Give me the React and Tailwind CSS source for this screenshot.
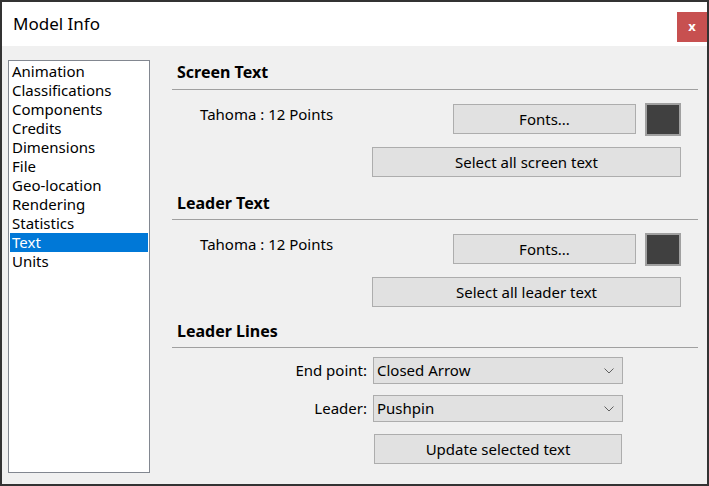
import React from 'react';

const items = [
  'Animation',
  'Classifications',
  'Components',
  'Credits',
  'Dimensions',
  'File',
  'Geo-location',
  'Rendering',
  'Statistics',
  'Text',
  'Units',
];

const font = { fontFamily: '"Noto Sans", "Open Sans", sans-serif' };

function Chevron() {
  return (
    <svg width="10" height="6" viewBox="0 0 10 6" className="shrink-0">
      <polyline points="0.5,0.5 5,5 9.5,0.5" fill="none" stroke="#606060" strokeWidth="1" />
    </svg>
  );
}

function Button({ children, className = '' }) {
  return (
    <button
      className={`h-[30px] bg-[#e1e1e1] border border-[#adadad] text-[15px] text-black flex items-center justify-center ${className}`}
    >
      {children}
    </button>
  );
}

function Select({ label, value, className = '' }) {
  return (
    <div className={`flex items-center h-[27px] ${className}`}>
      <div className="w-[195px] text-right text-[15px] text-black">{label}</div>
      <div className="ml-[6px] w-[250px] h-[27px] bg-[#e1e1e1] border border-[#adadad] flex items-center justify-between pl-[3px] pr-[8px]">
        <span className="text-[15px] text-black">{value}</span>
        <Chevron />
      </div>
    </div>
  );
}

function SectionHead({ title, className = '' }) {
  return (
    <div className={className}>
      <div className="h-[20px] pl-[5px] flex items-center text-[16px] font-bold text-black">{title}</div>
    </div>
  );
}

function FontRow({ selectLabel }) {
  return (
    <>
      <div className="mt-[13px] h-[33px] flex items-start">
        <div className="pl-[28px] h-[22px] flex items-center text-[15px] text-black">Tahoma : 12 Points</div>
        <div className="ml-auto mr-[17px] flex items-start gap-[9px]">
          <Button className="w-[183px] mt-[1px]">Fonts...</Button>
          <div className="w-[36px] h-[33px] bg-[#404040] border-2 border-[#a0a0a0]" />
        </div>
      </div>
      <div className="mt-[11px] flex justify-end pr-[17px]">
        <Button className="w-[309px]">{selectLabel}</Button>
      </div>
    </>
  );
}

export default function App() {
  return (
    <div style={font} className="w-[709px] h-[486px] border-2 border-[#333333] flex flex-col bg-[#f0f0f0]">
      {/* title bar */}
      <div className="h-[44px] bg-white flex items-start shrink-0">
        <div className="pl-[11px] h-[44px] flex items-center text-[17px] text-black">Model Info</div>
        <div className="ml-auto mt-[10px] w-[30px] h-[30px] bg-[#c75050] flex items-center justify-center text-white text-[13px] font-bold leading-none pb-[2px]">
          x
        </div>
      </div>

      <div className="flex-1 flex">
        {/* category list */}
        <div className="ml-[6px] mt-[14px] w-[142px] h-[413px] bg-white border border-[#828790] pt-[1px] px-[1px]">
          {items.map((it) => (
            <div
              key={it}
              className={`h-[19px] pl-[2px] flex items-center text-[15px] ${
                it === 'Text' ? 'bg-[#0078d7] text-white' : 'text-black'
              }`}
            >
              {it}
            </div>
          ))}
        </div>

        {/* settings */}
        <div className="ml-[22px] w-[526px] flex flex-col">
          <SectionHead title="Screen Text" className="mt-[16px]" />
          <div className="mt-[7px] h-px bg-[#a0a0a0]" />
          <FontRow selectLabel="Select all screen text" />

          <SectionHead title="Leader Text" className="mt-[16px]" />
          <div className="mt-[6px] h-px bg-[#a0a0a0]" />
          <FontRow selectLabel="Select all leader text" />

          <SectionHead title="Leader Lines" className="mt-[14px]" />
          <div className="mt-[6px] h-px bg-[#a0a0a0]" />
          <Select label="End point:" value="Closed Arrow" className="mt-[9px]" />
          <Select label="Leader:" value="Pushpin" className="mt-[11px]" />
          <div className="mt-[12px] pl-[202px]">
            <Button className="w-[248px]">Update selected text</Button>
          </div>
        </div>
      </div>
    </div>
  );
}
